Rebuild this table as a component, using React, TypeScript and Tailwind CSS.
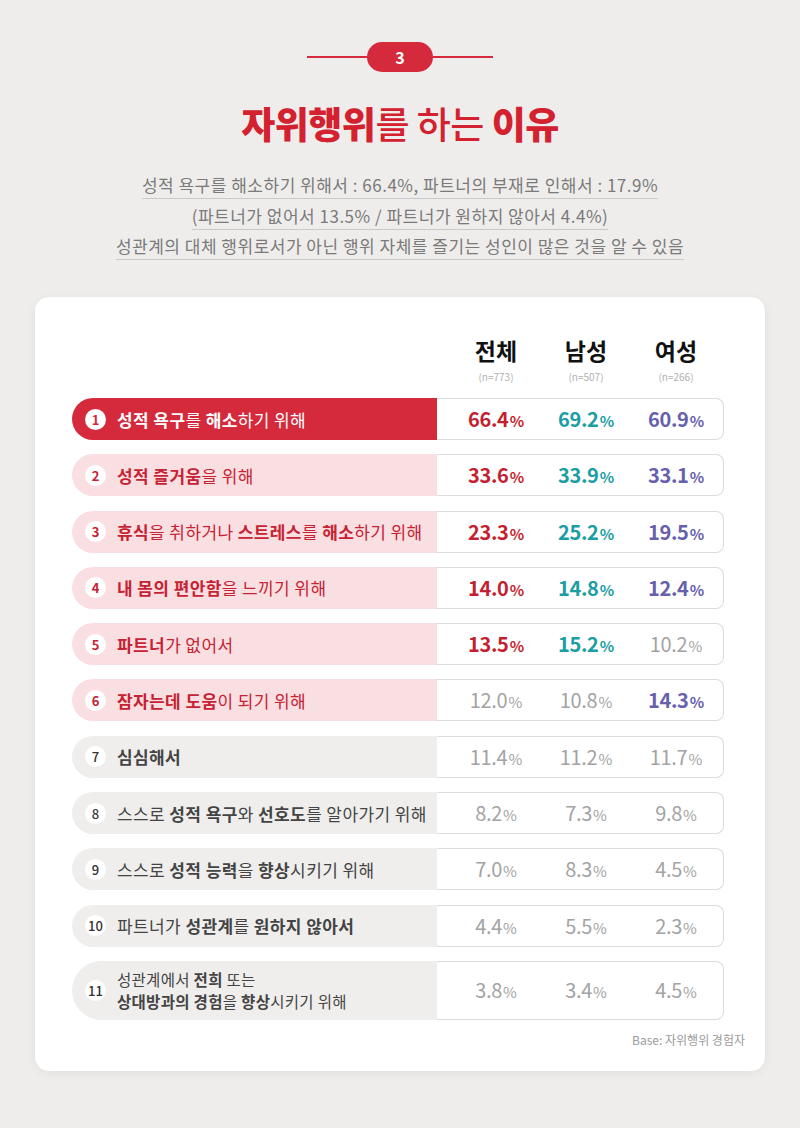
import React from "react";

type Seg = [string, boolean];
type Tone = "red" | "pink" | "gray";
type Val = { v: string; c: "r" | "t" | "p" | "g" };

interface Row {
  n: number;
  tone: Tone;
  lines: Seg[][];
  vals: Val[];
}

const rows: Row[] = [
  { n: 1, tone: "red", lines: [[["성적 욕구", true], ["를 ", false], ["해소", true], ["하기 위해", false]]], vals: [{ v: "66.4", c: "r" }, { v: "69.2", c: "t" }, { v: "60.9", c: "p" }] },
  { n: 2, tone: "pink", lines: [[["성적 즐거움", true], ["을 위해", false]]], vals: [{ v: "33.6", c: "r" }, { v: "33.9", c: "t" }, { v: "33.1", c: "p" }] },
  { n: 3, tone: "pink", lines: [[["휴식", true], ["을 취하거나 ", false], ["스트레스", true], ["를 ", false], ["해소", true], ["하기 위해", false]]], vals: [{ v: "23.3", c: "r" }, { v: "25.2", c: "t" }, { v: "19.5", c: "p" }] },
  { n: 4, tone: "pink", lines: [[["내 몸의 편안함", true], ["을 느끼기 위해", false]]], vals: [{ v: "14.0", c: "r" }, { v: "14.8", c: "t" }, { v: "12.4", c: "p" }] },
  { n: 5, tone: "pink", lines: [[["파트너", true], ["가 없어서", false]]], vals: [{ v: "13.5", c: "r" }, { v: "15.2", c: "t" }, { v: "10.2", c: "g" }] },
  { n: 6, tone: "pink", lines: [[["잠자는데 도움", true], ["이 되기 위해", false]]], vals: [{ v: "12.0", c: "g" }, { v: "10.8", c: "g" }, { v: "14.3", c: "p" }] },
  { n: 7, tone: "gray", lines: [[["심심해서", true]]], vals: [{ v: "11.4", c: "g" }, { v: "11.2", c: "g" }, { v: "11.7", c: "g" }] },
  { n: 8, tone: "gray", lines: [[["스스로 ", false], ["성적 욕구", true], ["와 ", false], ["선호도", true], ["를 알아가기 위해", false]]], vals: [{ v: "8.2", c: "g" }, { v: "7.3", c: "g" }, { v: "9.8", c: "g" }] },
  { n: 9, tone: "gray", lines: [[["스스로 ", false], ["성적 능력", true], ["을 ", false], ["향상", true], ["시키기 위해", false]]], vals: [{ v: "7.0", c: "g" }, { v: "8.3", c: "g" }, { v: "4.5", c: "g" }] },
  { n: 10, tone: "gray", lines: [[["파트너가 ", false], ["성관계", true], ["를 ", false], ["원하지 않아서", true]]], vals: [{ v: "4.4", c: "g" }, { v: "5.5", c: "g" }, { v: "2.3", c: "g" }] },
  {
    n: 11,
    tone: "gray",
    lines: [
      [["성관계에서 ", false], ["전희", true], [" 또는", false]],
      [["상대방과의 경험", true], ["을 ", false], ["향상", true], ["시키기 위해", false]],
    ],
    vals: [{ v: "3.8", c: "g" }, { v: "3.4", c: "g" }, { v: "4.5", c: "g" }],
  },
];

const pillTone: Record<Tone, string> = {
  red: "bg-[#d42a3c] text-white",
  pink: "bg-[#fadfe2] text-[#c62233]",
  gray: "bg-[#efeeec] text-[#444]",
};

const numTone: Record<Tone, string> = {
  red: "text-[#d42a3c] font-bold",
  pink: "text-[#c62233] font-bold",
  gray: "text-[#333] font-medium",
};

const valTone: Record<Val["c"], string> = {
  r: "text-[#c41f30] font-bold",
  t: "text-[#1b9ea3] font-bold",
  p: "text-[#6660ad] font-bold",
  g: "text-[#a3a3a3] font-normal",
};

const headers = [
  { t: "전체", n: "(n=773)" },
  { t: "남성", n: "(n=507)" },
  { t: "여성", n: "(n=266)" },
];

function DataRow({ row }: { row: Row }) {
  const tall = row.lines.length > 1;
  return (
    <div className={`flex ${tall ? "h-[59px]" : "h-[42px]"}`}>
      <div className={`w-[365px] flex items-center rounded-l-full pl-[13px] ${pillTone[row.tone]}`}>
        <span className={`w-[21px] h-[21px] rounded-full bg-white flex items-center justify-center text-[13px] leading-none shrink-0 ${numTone[row.tone]}`}>
          {row.n}
        </span>
        <div className={`ml-[11px] flex flex-col ${tall ? "text-[15.5px] leading-[22px] tracking-[0.3px]" : "text-[17px] leading-none tracking-[0.4px]"}`}>
          {row.lines.map((line, i) => (
            <div key={i}>
              {line.map(([t, b], j) => (
                <span key={j} className={b ? "font-bold" : "font-normal"}>
                  {t}
                </span>
              ))}
            </div>
          ))}
        </div>
      </div>
      <div className="w-[287px] flex items-center pl-[14px] bg-white border border-l-0 border-[#dcdcdc] rounded-r-lg">
        {row.vals.map((v, i) => (
          <div key={i} className={`w-[90px] text-center ${valTone[v.c]}`}>
            <span className="text-[20px] tracking-[-0.3px]">{v.v}</span>
            <span className="text-[15px] ml-[1px]">%</span>
          </div>
        ))}
      </div>
    </div>
  );
}

export default function App() {
  return (
    <div
      className="w-[800px] h-[1128px] bg-[#eeedeb] flex flex-col items-center"
      style={{ fontFamily: '"Noto Sans CJK KR", "Noto Sans", sans-serif' }}
    >
      {/* Badge */}
      <div className="mt-[42px] flex items-center">
        <div className="w-[60px] h-[2px] bg-[#d42a3c]" />
        <div className="w-[66px] h-[30px] rounded-full bg-[#d42a3c] text-white text-[16px] font-bold flex items-center justify-center">
          3
        </div>
        <div className="w-[60px] h-[2px] bg-[#d42a3c]" />
      </div>

      {/* Title */}
      <h1 className="mt-[27px] text-[37px] leading-[48px] text-[#d3212f] tracking-[-0.5px]">
        <span className="font-black">자위행위</span>
        <span className="font-medium">를 하는 </span>
        <span className="font-black">이유</span>
      </h1>

      {/* Subtitle */}
      <div className="mt-[25px] flex flex-col items-center gap-[3.5px] text-[17px] text-[#7a7a7a] tracking-[0.5px]">
        <span className="border-b border-[#c9c9c9] leading-[26px]">성적 욕구를 해소하기 위해서 : 66.4%, 파트너의 부재로 인해서 : 17.9%</span>
        <span className="border-b border-[#c9c9c9] leading-[26px]">(파트너가 없어서 13.5% / 파트너가 원하지 않아서 4.4%)</span>
        <span className="border-b border-[#c9c9c9] leading-[26px]">성관계의 대체 행위로서가 아닌 행위 자체를 즐기는 성인이 많은 것을 알 수 있음</span>
      </div>

      {/* Card */}
      <div className="mt-[37px] w-[730px] bg-white rounded-[14px] shadow-[0_2px_10px_rgba(0,0,0,0.06)] pl-[37px] pt-[38px] pb-[22px]">
        <div className="flex">
          <div className="w-[379px]" />
          {headers.map((h) => (
            <div key={h.t} className="w-[90px] flex flex-col items-center">
              <span className="text-[23px] font-bold text-[#111] leading-[30px]">{h.t}</span>
              <span className="text-[10px] text-[#b0b0b0] leading-[14px] mt-[5px]">{h.n}</span>
            </div>
          ))}
        </div>
        <div className="mt-[14px] flex flex-col gap-[14.3px]">
          {rows.map((r) => (
            <DataRow key={r.n} row={r} />
          ))}
        </div>
        <div className="w-[673px] mt-[11px] text-right text-[12px] text-[#9a9a9a]">
          Base: 자위행위 경험자
        </div>
      </div>
    </div>
  );
}
